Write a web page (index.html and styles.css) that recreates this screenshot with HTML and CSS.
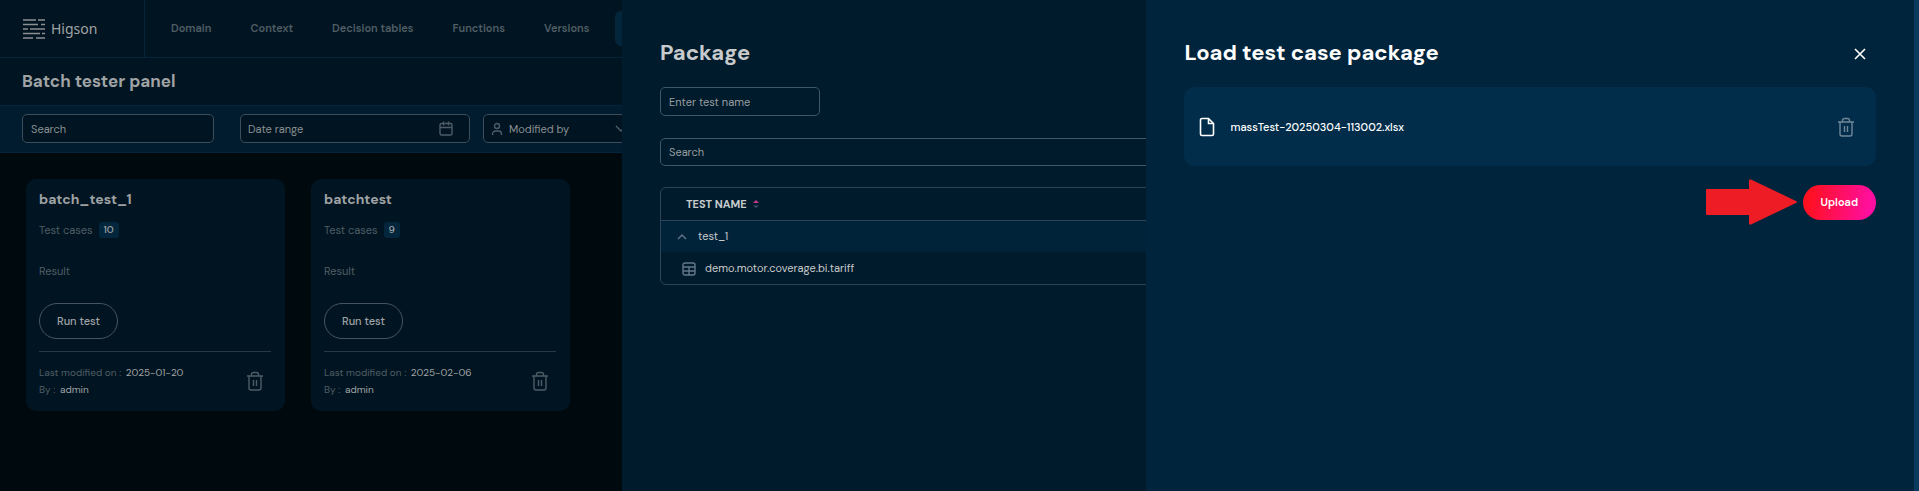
FILE: index.html
```html
<!DOCTYPE html>
<html lang="en">
<head>
    <meta charset="UTF-8">
    <meta name="viewport" content="width=device-width, initial-scale=1.0">
    <title>Higson - Batch tester panel</title>
    <link rel="stylesheet" href="styles.css">
</head>
<body>
    <!-- shared icons -->
    <svg class="sprite" aria-hidden="true">
        <symbol id="icon-trash" viewBox="0 0 18 20">
            <path d="M1 5h16M5.500 5V3.500a2 2 0 0 1 2-2h3a2 2 0 0 1 2 2V5M3 5v12a2 2 0 0 0 2 2h8a2 2 0 0 0 2-2V5M7.500 9v6M10.500 9v6"/>
        </symbol>
        <symbol id="icon-user" viewBox="0 0 12 14">
            <circle cx="6" cy="4" r="2.500"/>
            <path d="M1.500 13v-1a3 3 0 0 1 3-3h3a3 3 0 0 1 3 3v1"/>
        </symbol>
        <symbol id="icon-calendar" viewBox="0 0 14 15">
            <rect x="1" y="2.500" width="12" height="11.500" rx="1.500"/>
            <path d="M1 6.500h12M4.500 0.500v4M9.500 0.500v4"/>
        </symbol>
        <symbol id="icon-table" viewBox="0 0 14 14">
            <rect x="1" y="1" width="12" height="12" rx="2"/>
            <path d="M1 5h12M1 9h12M7 5v8"/>
        </symbol>
    </svg>

    <div class="page">
        <header class="topbar">
            <a href="#" class="logo">
                <svg width="22" height="20" viewBox="0 0 22 20">
                    <path d="M0 1h13M15 1h7M0 5.500h15M18 5.500h4M0 10h5M7 10h15M0 14.500h17M19 14.500h3M0 19h10M13 19h9"/>
                </svg>
                <span>Higson</span>
            </a>
            <nav class="nav">
                <a href="#">Domain</a>
                <a href="#">Context</a>
                <a href="#">Decision tables</a>
                <a href="#">Functions</a>
                <a href="#">Versions</a>
                <a href="#" class="active">Tester</a>
            </nav>
        </header>

        <div class="title-bar">
            <h1>Batch tester panel</h1>
        </div>

        <div class="filters">
            <input type="text" class="field filter-search" placeholder="Search" aria-label="Search tests">
            <button type="button" class="field filter-date">
                <span>Date range</span>
                <svg class="icon" width="14" height="15"><use href="#icon-calendar"/></svg>
            </button>
            <button type="button" class="field filter-user">
                <svg class="icon" width="12" height="14"><use href="#icon-user"/></svg>
                <span>Modified by</span>
                <svg class="icon chevron" width="12" height="8" viewBox="0 0 12 8"><path d="M1 1l5 5 5-5"/></svg>
            </button>
        </div>

        <main class="cards">
            <article class="card">
                <h2>batch_test_1</h2>
                <p class="cases">Test cases <span class="badge">10</span></p>
                <p class="result">Result</p>
                <button type="button" class="run-button">Run test</button>
                <footer class="card-footer">
                    <div>
                        <p>Last modified on : <b>2025-01-20</b></p>
                        <p>By : <b>admin</b></p>
                    </div>
                    <button type="button" class="icon-button" aria-label="Delete batch_test_1">
                        <svg class="icon" width="18" height="20"><use href="#icon-trash"/></svg>
                    </button>
                </footer>
            </article>
            <article class="card">
                <h2>batchtest</h2>
                <p class="cases">Test cases <span class="badge">9</span></p>
                <p class="result">Result</p>
                <button type="button" class="run-button">Run test</button>
                <footer class="card-footer">
                    <div>
                        <p>Last modified on : <b>2025-02-06</b></p>
                        <p>By : <b>admin</b></p>
                    </div>
                    <button type="button" class="icon-button" aria-label="Delete batchtest">
                        <svg class="icon" width="18" height="20"><use href="#icon-trash"/></svg>
                    </button>
                </footer>
            </article>
        </main>
    </div>

    <section class="drawer package">
        <h2>Package</h2>
        <input type="text" class="field package-name" placeholder="Enter test name" aria-label="Test name">
        <input type="text" class="field package-search" placeholder="Search" aria-label="Search package">
        <div class="table-box">
            <table>
                <thead>
                    <tr>
                        <th>
                            TEST NAME
                            <svg class="sort" width="6" height="8" viewBox="0 0 6 8">
                                <path class="sort-up" d="M3 0l3 3H0z"/>
                                <path class="sort-down" d="M3 8L0 5.500h6z"/>
                            </svg>
                        </th>
                    </tr>
                </thead>
                <tbody>
                    <tr class="group">
                        <td><svg class="icon" width="10" height="6" viewBox="0 0 10 6"><path d="M1 5l4-4 4 4"/></svg>test_1</td>
                    </tr>
                    <tr class="item">
                        <td><svg class="icon" width="14" height="14"><use href="#icon-table"/></svg>demo.motor.coverage.bi.tariff</td>
                    </tr>
                </tbody>
            </table>
        </div>
    </section>

    <section class="drawer upload">
        <div class="drawer-head">
            <h2>Load test case package</h2>
            <button type="button" class="icon-button close" aria-label="Close">
                <svg width="12" height="12" viewBox="0 0 12 12"><path d="M1 1l10 10M11 1L1 11"/></svg>
            </button>
        </div>
        <div class="file">
            <svg class="file-icon" width="16" height="20" viewBox="0 0 16 20">
                <path d="M9.500 1.500H3a1.500 1.500 0 0 0-1.500 1.500v14A1.500 1.500 0 0 0 3 18.500h10a1.500 1.500 0 0 0 1.500-1.500V6.500zM9.500 1.500v5h5"/>
            </svg>
            <span>massTest-20250304-113002.xlsx</span>
            <button type="button" class="icon-button" aria-label="Remove file">
                <svg class="icon" width="18" height="20"><use href="#icon-trash"/></svg>
            </button>
        </div>
        <div class="actions">
            <svg class="arrow" width="92" height="46" viewBox="0 0 92 46">
                <path d="M1 10h42V2q0-3 3-1l44 21q2 1 0 2L46 45q-3 2-3-1v-8H1q-1 0-1-1V11q0-1 1-1z"/>
            </svg>
            <button type="button" class="upload-button">Upload</button>
        </div>
    </section>

    <div class="scroll-strip"></div>
</body>
</html>
```
FILE: styles.css
```css
* {
    margin: 0;
    padding: 0;
    box-sizing: border-box;
}
body {
    min-height: 100vh;
    background: #00090e;
    color: #a0a3a5;
    font-family: "DM Sans", Inter, sans-serif;
    font-size: 11px;
    line-height: 16px;
    overflow: hidden;
}
a {
    color: inherit;
    text-decoration: none;
}
button,
input {
    font: inherit;
    color: inherit;
}
button {
    background: none;
    border: none;
    cursor: pointer;
}
.sprite {
    display: none;
}
.icon {
    flex: none;
    fill: none;
    stroke: #4d5c66;
    stroke-width: 1.4;
}
.icon-button {
    display: flex;
}

/* top bar */
.topbar {
    display: flex;
    height: 58px;
    background: #001521;
    border-bottom: 1px solid #02253b;
}
.logo {
    display: flex;
    align-items: center;
    gap: 6px;
    width: 145px;
    padding-left: 23px;
    border-right: 1px solid #02253b;
    font-family: "Noto Sans", sans-serif;
    font-size: 14px;
}
.logo svg {
    fill: none;
    stroke: #8d8f91;
    stroke-width: 1.3;
}
.nav {
    display: flex;
    align-items: center;
    gap: 13px;
    padding-left: 13px;
    color: #505d65;
    font-weight: 600;
}
.nav a {
    padding: 10px 13px;
    line-height: 15px;
    white-space: nowrap;
}
.nav .active {
    background: #03263d;
    border-radius: 6px;
}
.title-bar {
    padding: 12px 22px;
    background: #001521;
    border-bottom: 1px solid #02253b;
}
.title-bar h1 {
    font-size: 17px;
    line-height: 23px;
}

/* filters */
.field {
    height: 29px;
    padding: 0 8px;
    background: #001521;
    border: 1px solid #3c4e5b;
    border-radius: 5px;
    color: #8b8f92;
    outline: none;
}
.field::placeholder {
    color: #8b8f92;
    opacity: 1;
}
.filters {
    display: flex;
    align-items: flex-start;
    height: 47px;
    padding: 8px 0 0 22px;
    background: #001c2e;
    border-bottom: 1px solid #02253b;
}
.filter-search {
    width: 192px;
    margin-right: 26px;
}
.filter-date {
    display: flex;
    align-items: center;
    justify-content: space-between;
    width: 230px;
    margin-right: 13px;
    padding: 0 16px 0 7px;
}
.filter-user {
    display: flex;
    align-items: center;
    gap: 6px;
    width: 152px;
    padding: 0 7px;
}
.chevron {
    margin-left: auto;
}

/* cards */
.cards {
    display: flex;
    flex-wrap: wrap;
    gap: 26px;
    padding: 26px;
}
.card {
    width: 259px;
    padding: 12px 14px 13px 13px;
    background: #001521;
    border-radius: 10px;
}
.card h2 {
    font-size: 14px;
    line-height: 16px;
}
.cases,
.result {
    color: #505d65;
}
.cases {
    display: flex;
    align-items: center;
    gap: 6px;
    margin-top: 15px;
}
.badge {
    padding: 0 5px;
    background: #03263d;
    border-radius: 3px;
    color: #a0a3a5;
    font-size: 10px;
    font-weight: 500;
}
.result {
    margin-top: 25px;
}
.run-button {
    height: 36px;
    margin-top: 24px;
    padding: 0 17px;
    border: 1px solid #46555f;
    border-radius: 18px;
    font-weight: 500;
}
.card-footer {
    display: flex;
    align-items: center;
    justify-content: space-between;
    margin-top: 12px;
    padding: 12px 7px 0 0;
    border-top: 1px solid #263945;
    color: #505d65;
    font-size: 10px;
    line-height: 17px;
}
.card-footer b {
    margin-left: 2px;
    color: #a0a3a5;
    font-weight: 400;
}

/* drawers */
.drawer {
    position: fixed;
    top: 0;
    bottom: 0;
    right: 5px;
    padding: 36px 38px;
}
.drawer h2 {
    font-size: 22px;
    line-height: 34px;
}
.package {
    width: 100%;
    max-width: 1292px;
    background: #001b2b;
    color: #c8cbcd;
}
.package .field {
    display: block;
    background: transparent;
    border-color: #40566a;
}
.package .field::placeholder {
    color: #999da1;
}
.package .package-name {
    width: 160px;
    margin-top: 17px;
}
.package .package-search {
    width: 100%;
    height: 28px;
    margin-top: 22px;
}
.table-box {
    margin-top: 21px;
    border: 1px solid #2c4455;
    border-radius: 6px;
    overflow: hidden;
}
table {
    width: 100%;
    border-collapse: collapse;
}
th,
td {
    height: 32px;
    text-align: left;
}
th {
    padding-left: 25px;
    border-bottom: 1px solid #2c4455;
    font-weight: 700;
}
td .icon {
    vertical-align: middle;
    stroke: #64788a;
}
.group {
    background: #00233a;
}
.group td {
    padding-left: 16px;
}
.group .icon {
    margin-right: 11px;
}
.item td {
    padding-left: 21px;
}
.item .icon {
    margin-right: 9px;
}
.sort {
    margin-left: 4px;
}
.sort-up {
    fill: #c23a8e;
}
.sort-down {
    fill: #35506a;
}

/* upload drawer */
.upload {
    width: 40vw;
    background: #00243b;
    color: #fff;
}
.drawer-head {
    display: flex;
    align-items: center;
    justify-content: space-between;
}
.close {
    padding: 12px 10px 10px;
}
.close svg {
    fill: none;
    stroke: #fff;
    stroke-width: 1.6;
}
.file {
    display: flex;
    align-items: center;
    gap: 15px;
    height: 79px;
    margin-top: 17px;
    padding: 0 21px 0 15px;
    background: #012d4a;
    border-radius: 10px;
    font-weight: 500;
}
.file .icon-button {
    margin-left: auto;
}
.file .icon {
    stroke: #6f8799;
}
.file-icon {
    fill: none;
    stroke: #fff;
    stroke-width: 1.6;
}
.actions {
    display: flex;
    align-items: center;
    justify-content: flex-end;
    gap: 5px;
    margin-top: 13px;
}
.arrow {
    fill: #ee1c24;
}
.upload-button {
    height: 35px;
    padding: 0 18px;
    background: linear-gradient(100deg, #ff1020 10%, #ff0fa0 90%);
    border-radius: 18px;
    font-weight: 600;
}
.scroll-strip {
    position: fixed;
    top: 0;
    bottom: 0;
    right: 0;
    width: 5px;
    background: #083a5e;
}
```
